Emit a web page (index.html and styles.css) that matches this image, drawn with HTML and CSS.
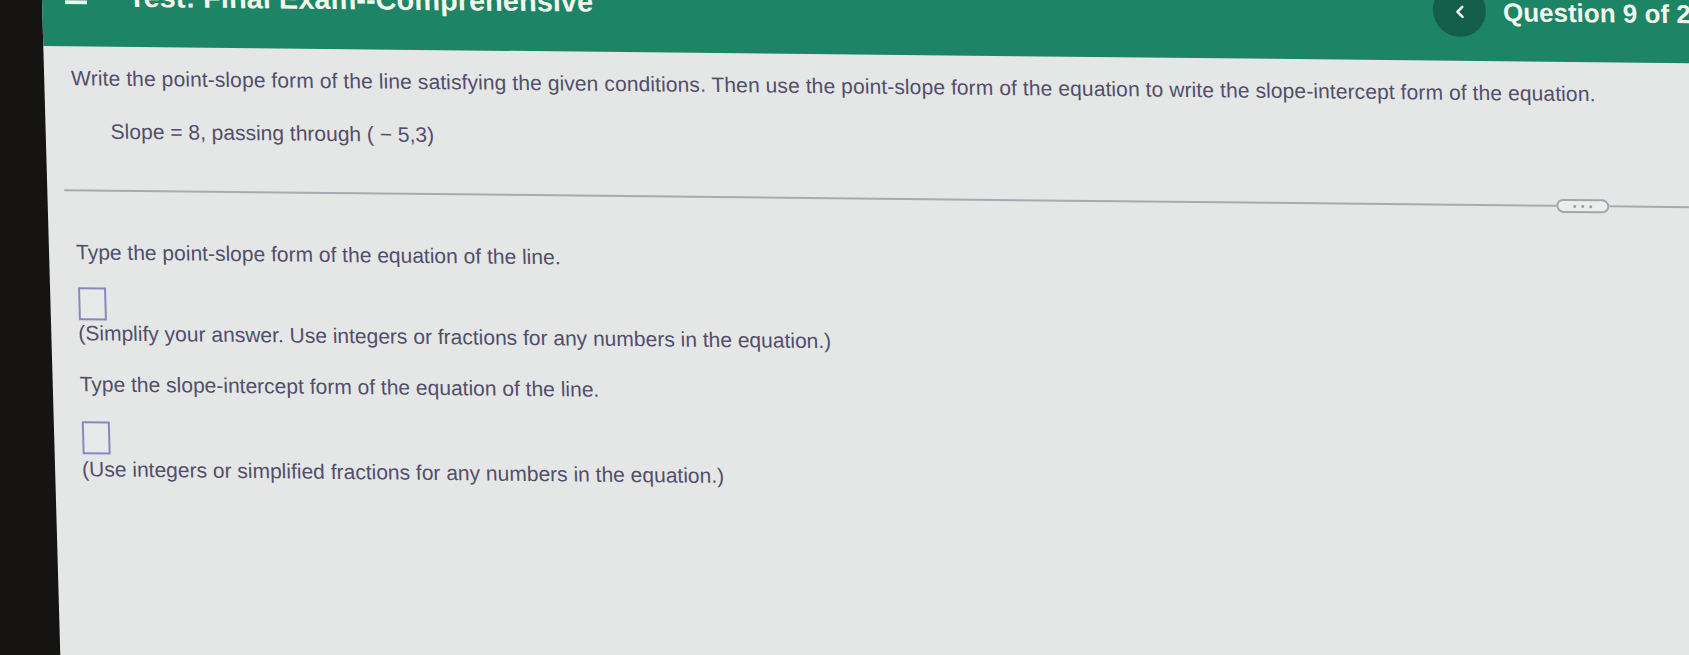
FILE: index.html
```html
<!DOCTYPE html>
<html lang="en">
<head>
<meta charset="utf-8">
<title>Test: Final Exam--Comprehensive</title>
<link rel="stylesheet" href="styles.css">
</head>
<body>
<div class="screen">
  <header class="topbar">
    <div class="topbar-left">
      <svg class="menu" width="22" height="18" viewBox="0 0 22 18" aria-hidden="true">
        <rect x="0" y="0" width="22" height="4" fill="#f2f5ec"/>
        <rect x="0" y="7" width="22" height="4" fill="#f2f5ec"/>
        <rect x="0" y="14" width="22" height="4" fill="#f2f5ec"/>
      </svg>
      <h1 class="title">Test: Final Exam--Comprehensive</h1>
    </div>
    <div class="topbar-right">
      <button class="back" type="button" aria-label="Previous question">
        <svg width="10" height="14" viewBox="0 0 10 14" aria-hidden="true">
          <path d="M7.5 2 L2.5 7 L7.5 12" fill="none" stroke="#f2f5ec" stroke-width="2.6" stroke-linecap="round" stroke-linejoin="round"/>
        </svg>
      </button>
      <span class="qnum">Question 9 of 24</span>
    </div>
  </header>

  <main class="content">
    <p class="prompt">Write the point-slope form of the line satisfying the given conditions. Then use the point-slope form of the equation to write the slope-intercept form of the equation.</p>
    <p class="given">Slope = 8, passing through ( &minus; 5,3)</p>

    <div class="rule">
      <span class="rule-line rule-line-left"></span>
      <span class="pill"><i class="dot"></i><i class="dot"></i><i class="dot"></i></span>
      <span class="rule-line rule-line-right"></span>
    </div>

    <p class="ask ask-first">Type the point-slope form of the equation of the line.</p>
    <span class="answer-box"></span>
    <p class="hint hint-first">(Simplify your answer. Use integers or fractions for any numbers in the equation.)</p>

    <p class="ask ask-second">Type the slope-intercept form of the equation of the line.</p>
    <span class="answer-box"></span>
    <p class="hint hint-second">(Use integers or simplified fractions for any numbers in the equation.)</p>
  </main>
</div>
</body>
</html>
```

FILE: styles.css
```css
html, body {
  margin: 0;
  padding: 0;
  height: 100%;
}

body {
  background: #161313;
  overflow: hidden;
  font-family: "Liberation Sans", Arial, sans-serif;
}

.screen {
  margin-top: -30px;
  margin-left: 42px;
  width: 1660px;
  height: 760px;
  background: #e5e7e6;
  transform: skew(1.6deg, 0.6deg);
  transform-origin: 0 30px;
}

/* ---------- top bar ---------- */
.topbar {
  display: flex;
  align-items: flex-start;
  height: 46px;
  padding-top: 30px;
  background: #1d8466;
  overflow: hidden;
}

.topbar-left {
  display: flex;
  align-items: flex-start;
  flex: none;
  width: 1391px;
}

.menu {
  display: block;
  margin: -14px 0 0 23px;
}

.title {
  margin: -18.5px 0 0 41px;
  font-size: 29px;
  line-height: 29px;
  font-weight: 700;
  color: #f3f6ec;
  white-space: nowrap;
}

.topbar-right {
  display: flex;
  align-items: flex-start;
  flex: none;
}

.back {
  display: flex;
  align-items: center;
  justify-content: center;
  width: 53px;
  height: 53px;
  margin-top: -31px;
  padding: 0;
  border: none;
  border-radius: 50%;
  background: #135f4b;
}

.back svg {
  display: block;
  margin-top: 2px;
}

.qnum {
  margin: -16px 0 0 17px;
  font-size: 26px;
  line-height: 26px;
  font-weight: 700;
  color: #f3f6ec;
  white-space: nowrap;
}

/* ---------- question content ---------- */
.content {
  padding: 20px 0 0 27px;
  font-size: 21px;
  line-height: 24px;
  color: #524e6b;
}

.content p {
  margin: 0;
  white-space: nowrap;
}

.prompt {
  letter-spacing: 0.1px;
}

.given {
  margin-top: 29px !important;
  margin-left: 38px !important;
}

.rule {
  display: flex;
  align-items: center;
  margin: 40px 0 0 -10px;
  height: 14px;
}

.rule-line {
  height: 2px;
  background: #a8a9b2;
}

.rule-line-left {
  flex: none;
  width: 1492px;
}

.rule-line-right {
  flex: 1;
}

.pill {
  display: flex;
  align-items: center;
  justify-content: center;
  gap: 5px;
  box-sizing: border-box;
  width: 53px;
  height: 14px;
  border: 2px solid #a4a5ae;
  border-radius: 8px;
  background: #eceeed;
}

.dot {
  display: block;
  width: 3px;
  height: 3px;
  border-radius: 50%;
  background: #9a9ba4;
}

.ask-first {
  margin-top: 43px !important;
}

.answer-box {
  display: block;
  box-sizing: border-box;
  width: 28px;
  height: 33px;
  margin-left: 1px;
  border: 2px solid #8789bd;
  background: #e8eaea;
}

.ask-first + .answer-box {
  margin-top: 23px;
}

.hint-first {
  margin-top: 1px !important;
}

.ask-second {
  margin-top: 27px !important;
}

.ask-second + .answer-box {
  margin-top: 25px;
}

.hint-second {
  margin-top: 3px !important;
}
```
